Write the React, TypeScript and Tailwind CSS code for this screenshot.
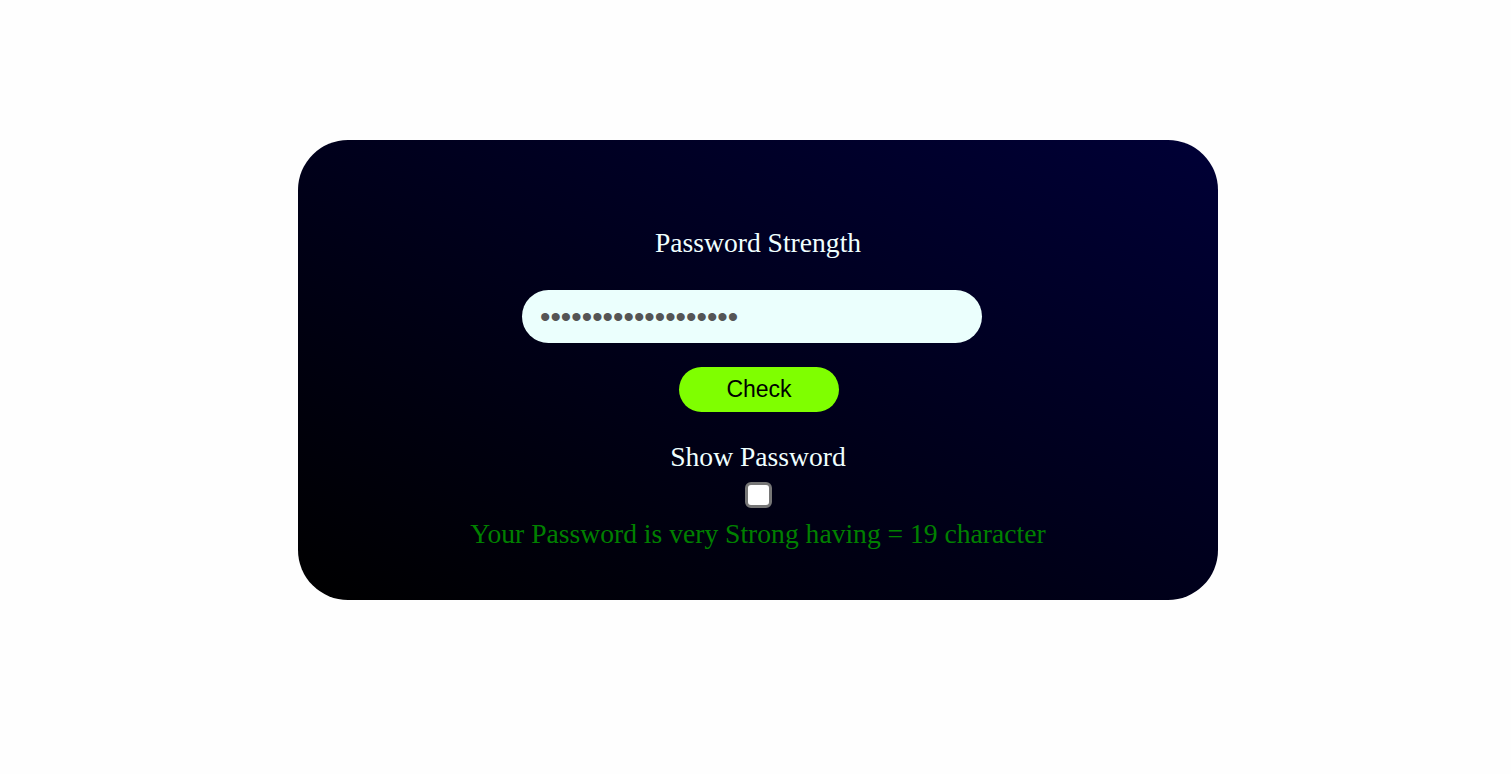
import React, { useState } from 'react';

const serif = { fontFamily: '"Liberation Serif", "Times New Roman", serif' };
const sans = { fontFamily: '"Liberation Sans", Arial, sans-serif' };

export default function App() {
  const [password, setPassword] = useState('abcdefghijklmnopqrs');
  const [show, setShow] = useState(false);

  return (
    <div className="min-h-screen w-full bg-[#fefefe] flex justify-center pt-[140px] pl-[5px]">
      <div
        className="w-[920px] h-[460px] rounded-[50px] bg-[linear-gradient(to_top_right,#000000,#000036)] flex flex-col items-center pt-[88px]"
        style={serif}
      >
        <h1 className="text-[27.6px] leading-[30px] text-[#f0ffff] font-normal">Password Strength</h1>

        <input
          type={show ? 'text' : 'password'}
          value={password}
          onChange={(e) => setPassword(e.target.value)}
          className="mt-[32px] mr-[12px] w-[460px] h-[53px] rounded-full bg-[#ebfffd] text-[#555555] pl-[18px] pr-[19px] text-[29.8px] outline-none"
          style={sans}
        />

        <button
          className="mt-[24px] ml-[2px] w-[160px] h-[45px] rounded-full bg-[#7fff00] text-black text-[23px]"
          style={sans}
        >
          Check
        </button>

        <label htmlFor="show" className="mt-[30px] text-[27.6px] leading-[30px] text-[#f0ffff]">
          Show Password
        </label>
        <input
          id="show"
          type="checkbox"
          checked={show}
          onChange={(e) => setShow(e.target.checked)}
          className="mt-[10px] w-[27px] h-[26px] appearance-none bg-white border-[3px] border-[#767676] rounded-[6px]"
        />

        <p className="mt-[10px] text-[27.6px] leading-[32px] text-[#008000]">
          Your Password is very Strong having = {password.length} character
        </p>
      </div>
    </div>
  );
}
